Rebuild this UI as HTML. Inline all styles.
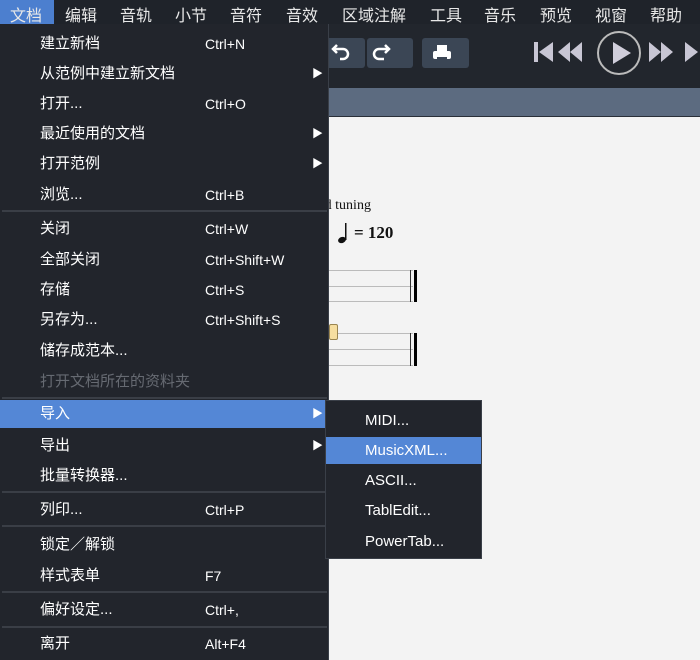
<!DOCTYPE html>
<html><head><meta charset="utf-8"><style>
*{margin:0;padding:0;box-sizing:border-box}
body{width:700px;height:660px;overflow:hidden;background:#f3f3f3;font-family:"Liberation Sans","Noto Sans CJK SC",sans-serif;position:relative;color:#fff}
.abs{position:absolute}
#bar{left:0;top:0;width:700px;height:24px;background:#1f232a}
#bar span{position:absolute;top:2px;font-size:16px;color:#e8e8e8}
#tb{left:0;top:24px;width:700px;height:64px;background:#22262d}
#blue{left:0;top:88px;width:700px;height:29px;background:#5c6b80;border-bottom:1px solid #2a2f38}
.btn{background:#3b4655;border-radius:3px;top:38px;height:30px}
#menu{left:0;top:24px;width:329px;height:636px;background:#22252c;border-right:1px solid #3a3f48}
.it{position:absolute;left:0;width:328px;height:30px;font-size:15px;line-height:30px}
.it .t{position:absolute;left:40px}
.it .k{position:absolute;left:205px;font-size:14px}
.it .a{position:absolute;left:312px;top:0;font-size:11px}
.sep{position:absolute;left:2px;width:325px;height:2px;background:#3a3e46}
#sub{left:325px;top:400px;width:157px;height:159px;background:#22252c;border:1px solid #3a3f48}
.si{position:absolute;left:0;width:155px;height:27px;line-height:27px;font-size:15px;padding-left:39px}
.ser{font-family:"Liberation Serif",serif;color:#111}
.line{position:absolute;height:1px;background:#bbb}
</style></head><body>
<div id="bar" class="abs">
<div class="abs" style="left:0;top:0;width:54px;height:24px;background:#4c7fcf"></div>
<span style="left:10px">文档</span><span style="left:65px">编辑</span><span style="left:120px">音轨</span><span style="left:175px">小节</span><span style="left:230px">音符</span><span style="left:286px">音效</span><span style="left:342px">区域注解</span><span style="left:430px">工具</span><span style="left:484px">音乐</span><span style="left:540px">预览</span><span style="left:595px">视窗</span><span style="left:650px">帮助</span>
</div>
<div id="tb" class="abs"></div>
<div class="abs btn" style="left:326px;width:39px"></div>
<div class="abs btn" style="left:367px;width:46px"></div>
<div class="abs btn" style="left:422px;width:47px"></div>
<svg class="abs" style="left:326px;top:38px" width="150" height="30">
<path d="M14 21 h3 a5 5 0 0 0 0 -10 h-10 M11 7 l-4 4 4 4" stroke="#fff" stroke-width="2.5" fill="none"/>
<path d="M58 21 h-5 a5 5 0 0 1 0 -10 h10 M59 7 l4 4 -4 4" stroke="#fff" stroke-width="2.5" fill="none"/>
<rect x="111" y="7" width="10" height="7" fill="#fff"/><rect x="107" y="13" width="18" height="8" rx="2" fill="#fff"/><rect x="111" y="19" width="10" height="3" fill="#3b4655"/>
</svg>
<svg class="abs" style="left:530px;top:30px" width="170" height="46">
<rect x="4" y="12" width="4" height="20" fill="#c8c6d4"/><path d="M9 22 L23 12 V32Z" fill="#c8c6d4"/>
<path d="M28 22 L40 12 V32Z M40 22 L52 12 V32Z" fill="#c8c6d4"/>
<circle cx="89" cy="23" r="21" stroke="#bbb" stroke-width="2" fill="none"/><path d="M83 12 L101 23 83 34Z" fill="#d0cedb"/>
<path d="M119 12 L131 22 119 32Z M131 12 L143 22 131 32Z" fill="#c8c6d4"/><path d="M155 12 L168 22 155 32Z" fill="#c8c6d4"/>
</svg>
<div id="blue" class="abs"></div>
<div class="abs ser" style="left:320px;top:198px;font-size:14px">rd tuning</div>
<svg class="abs" style="left:337px;top:222px" width="14" height="22"><ellipse cx="5" cy="18" rx="4" ry="3" fill="#111" transform="rotate(-20 5 18)"/><rect x="8" y="1" width="1.5" height="17" fill="#111"/></svg>
<div class="abs ser" style="left:354px;top:223px;font-size:17px;font-weight:bold">= 120</div>
<div class="line" style="left:329px;width:84px;top:270px"></div><div class="line" style="left:329px;width:84px;top:286px"></div><div class="line" style="left:329px;width:84px;top:301px"></div>
<div class="line" style="left:329px;width:84px;top:333px"></div><div class="line" style="left:329px;width:84px;top:349px"></div><div class="line" style="left:329px;width:84px;top:365px"></div>
<div class="abs" style="left:410px;top:270px;width:1px;height:32px;background:#333"></div><div class="abs" style="left:414px;top:270px;width:3px;height:32px;background:#000"></div>
<div class="abs" style="left:410px;top:333px;width:1px;height:33px;background:#333"></div><div class="abs" style="left:414px;top:333px;width:3px;height:33px;background:#000"></div>
<div class="abs" style="left:329px;top:324px;width:9px;height:16px;background:#f6dea0;border:1px solid #9a8550;border-radius:2px"></div>
<div id="menu" class="abs">
<div class="it" style="top:5px"><span class="t">建立新档</span><span class="k">Ctrl+N</span></div>
<div class="it" style="top:35px"><span class="t">从范例中建立新文档</span><span class="a">▶</span></div>
<div class="it" style="top:65px"><span class="t">打开...</span><span class="k">Ctrl+O</span></div>
<div class="it" style="top:95px"><span class="t">最近使用的文档</span><span class="a">▶</span></div>
<div class="it" style="top:125px"><span class="t">打开范例</span><span class="a">▶</span></div>
<div class="it" style="top:156px"><span class="t">浏览...</span><span class="k">Ctrl+B</span></div>
<div class="sep" style="top:186px"></div>
<div class="it" style="top:190px"><span class="t">关闭</span><span class="k">Ctrl+W</span></div>
<div class="it" style="top:221px"><span class="t">全部关闭</span><span class="k">Ctrl+Shift+W</span></div>
<div class="it" style="top:251px"><span class="t">存储</span><span class="k">Ctrl+S</span></div>
<div class="it" style="top:281px"><span class="t">另存为...</span><span class="k">Ctrl+Shift+S</span></div>
<div class="it" style="top:312px"><span class="t">储存成范本...</span></div>
<div class="it" style="top:343px;color:#666a72"><span class="t">打开文档所在的资料夹</span></div>
<div class="sep" style="top:373px"></div>
<div class="it" style="top:376px;height:28px;line-height:28px;background:#5487d6"><span class="t">导入</span><span class="a">▶</span></div>
<div class="it" style="top:407px"><span class="t">导出</span><span class="a">▶</span></div>
<div class="it" style="top:437px"><span class="t">批量转换器...</span></div>
<div class="sep" style="top:467px"></div>
<div class="it" style="top:471px"><span class="t">列印...</span><span class="k">Ctrl+P</span></div>
<div class="sep" style="top:501px"></div>
<div class="it" style="top:506px"><span class="t">锁定／解锁</span></div>
<div class="it" style="top:537px"><span class="t">样式表单</span><span class="k">F7</span></div>
<div class="sep" style="top:567px"></div>
<div class="it" style="top:571px"><span class="t">偏好设定...</span><span class="k">Ctrl+,</span></div>
<div class="sep" style="top:602px"></div>
<div class="it" style="top:605px"><span class="t">离开</span><span class="k">Alt+F4</span></div>
</div>
<div id="sub" class="abs">
<div class="si" style="top:6px">MIDI...</div>
<div class="si" style="top:36px;background:#5487d6">MusicXML...</div>
<div class="si" style="top:66px">ASCII...</div>
<div class="si" style="top:96px">TablEdit...</div>
<div class="si" style="top:127px">PowerTab...</div>
</div>
</body></html>
